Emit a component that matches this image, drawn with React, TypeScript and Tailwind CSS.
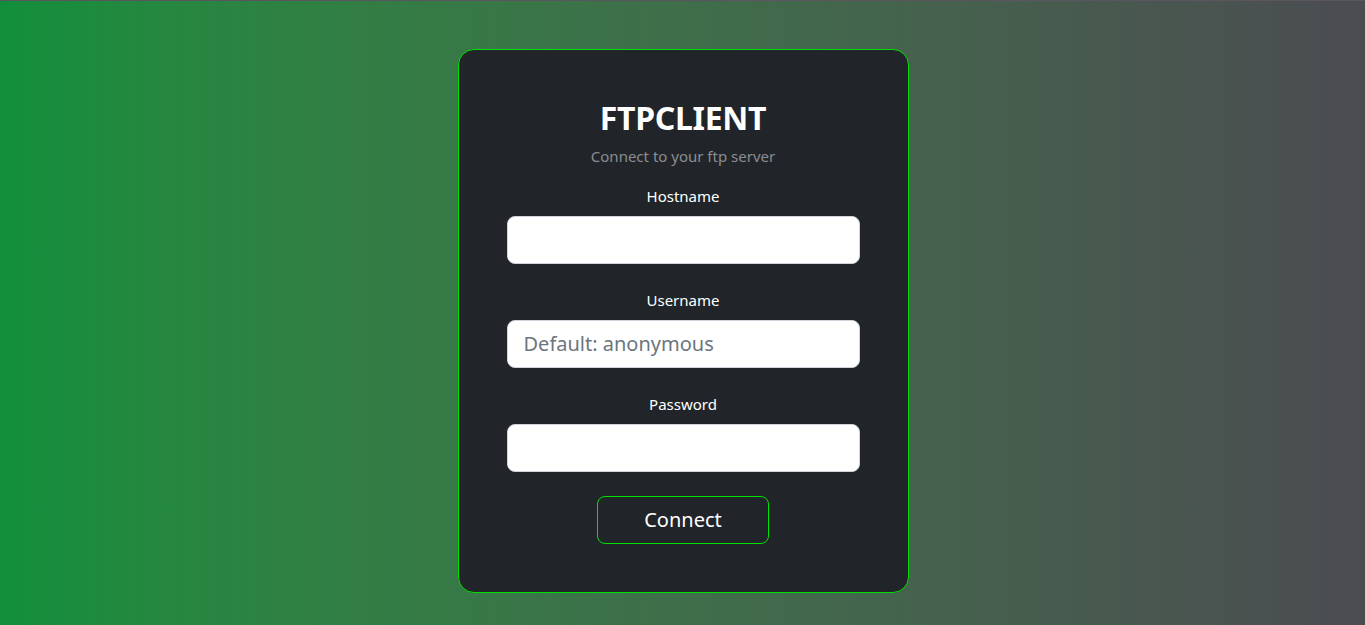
import React from "react";

export default function App() {
  const font = { fontFamily: '"Noto Sans", "Open Sans", sans-serif' };
  return (
    <div
      className="min-h-screen w-full border-t border-[#5b5560] bg-gradient-to-r from-[#118f3b] to-[#4b4c51] flex justify-center pt-12"
      style={font}
    >
      <div className="ml-[1px] w-[451px] h-[544px] bg-[#212529] border border-[#00e000] rounded-2xl px-12 pt-12 flex flex-col items-center">
        <h1 className="text-[32px] font-bold text-white leading-[1.2] mt-[1px] tracking-[-0.3px]">FTPCLIENT</h1>
        <p className="text-[15px] text-[#8a8d91] leading-[1.5] mt-[8px]">Connect to your ftp server</p>
        <form className="w-full flex flex-col items-center mt-[17px]" onSubmit={(e) => e.preventDefault()}>
          <label className="text-[15px] text-white leading-[23px] mb-[8px]">Hostname</label>
          <input className="w-[353px] h-12 rounded-lg bg-white border border-[#ced4da] px-4 text-[20px] text-[#212529] outline-none" />
          <label className="text-[15px] text-white leading-[23px] mt-[25px] mb-[8px]">Username</label>
          <input
            placeholder="Default: anonymous"
            className="w-[353px] h-12 rounded-lg bg-white border border-[#ced4da] px-4 text-[20px] text-[#212529] placeholder:text-[#6c757d] outline-none"
          />
          <label className="text-[15px] text-white leading-[23px] mt-[25px] mb-[8px]">Password</label>
          <input type="password" className="w-[353px] h-12 rounded-lg bg-white border border-[#ced4da] px-4 text-[20px] text-[#212529] outline-none" />
          <button className="mt-6 w-[172px] h-12 rounded-lg border border-[#00e000] text-white text-[20px] bg-transparent">
            Connect
          </button>
        </form>
      </div>
    </div>
  );
}
